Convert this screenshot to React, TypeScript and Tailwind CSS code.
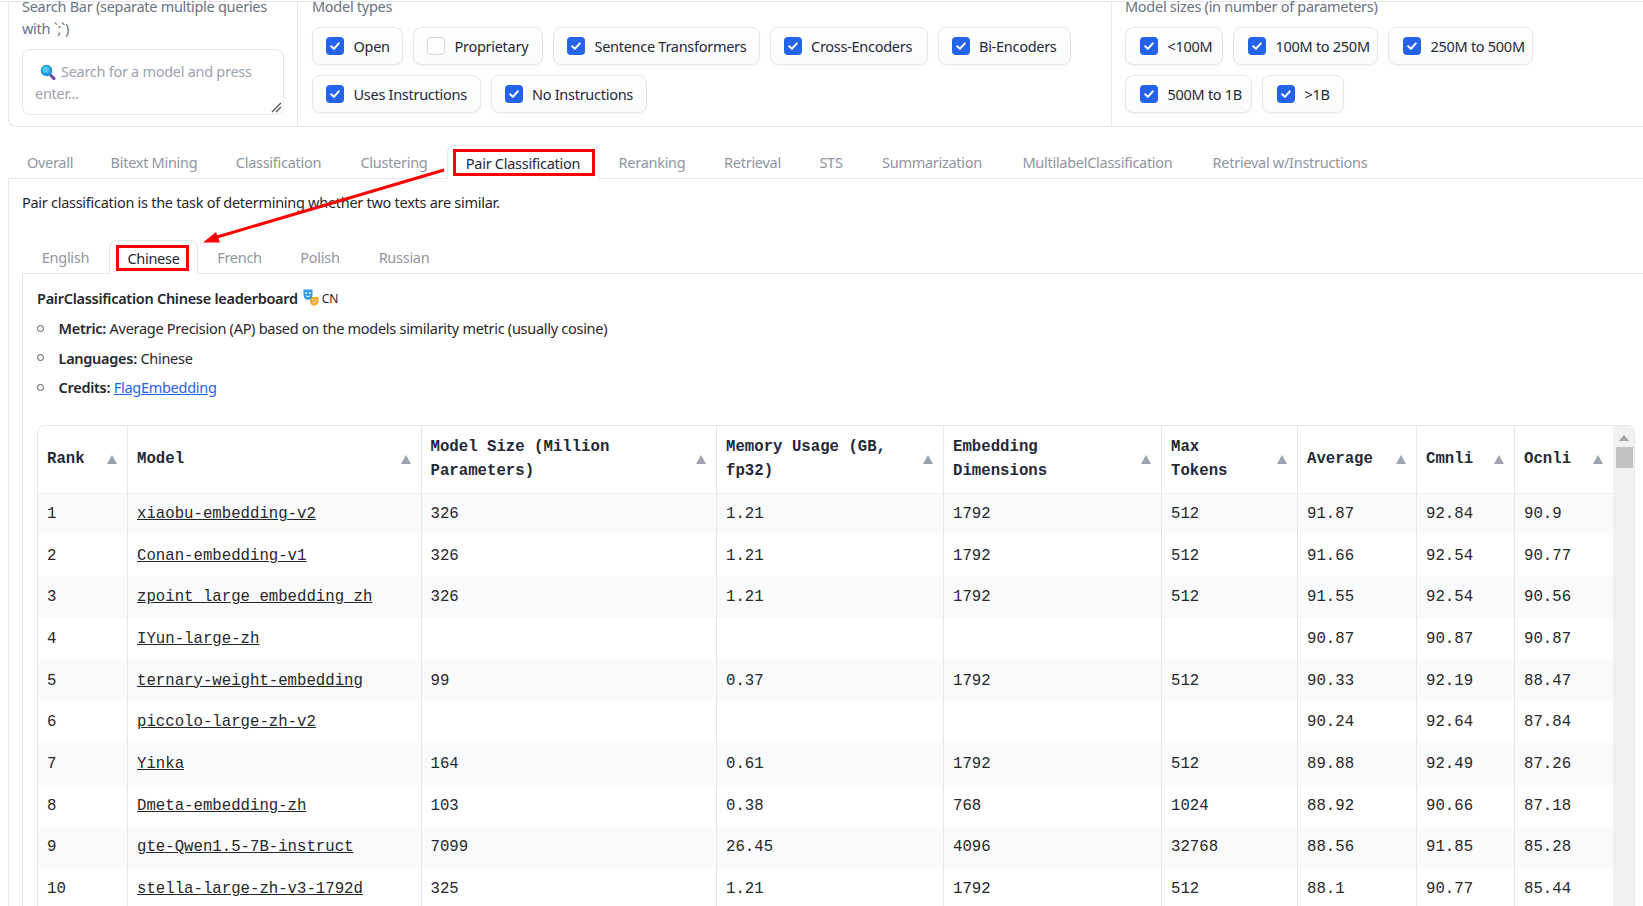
import React from "react";

const sans = "font-['Noto_Sans','Open_Sans',sans-serif] text-[14.5px] leading-[22px] tracking-[-0.28px]";

function Check({ on = true }: { on?: boolean }) {
  if (!on) return <span className="block w-[18px] h-[18px] shrink-0 rounded-[4px] border border-[#d1d5db] bg-white" />;
  return (
    <span className="flex items-center justify-center w-[18px] h-[18px] shrink-0 rounded-[4px] bg-[#2563eb]">
      <svg width="12" height="12" viewBox="0 0 12 12" fill="none">
        <path d="M2.2 6.3 4.9 8.8 9.8 3.4" stroke="#fff" strokeWidth="2" strokeLinecap="round" strokeLinejoin="round" />
      </svg>
    </span>
  );
}

function Chip({ label, width, on = true, pad = "pl-[13px]" }: { label: string; width: string; on?: boolean; pad?: string }) {
  return (
    <div className={`${width} ${pad} h-[38px] flex items-center gap-[9.5px] rounded-lg border border-[#e5e7eb] bg-gradient-to-b from-white to-[#f9fafb] shadow-[0_1px_2px_rgba(0,0,0,0.04)] text-[#1f2937] whitespace-nowrap`}>
      <Check on={on} />
      <span className="-mt-[1px]">{label}</span>
    </div>
  );
}

function SearchEmoji() {
  return (
    <svg className="inline-block align-[-3px] ml-[5px] mr-[5px]" width="16" height="16" viewBox="0 0 16 16">
      <path d="M9.5 10 L14 14.6" stroke="#6b4fa0" strokeWidth="3" strokeLinecap="round" />
      <circle cx="6.5" cy="6.5" r="5.8" fill="#1d9bd8" />
      <circle cx="6" cy="5.6" r="3.4" fill="#4fc3f0" />
    </svg>
  );
}

function MaskEmoji() {
  return (
    <svg className="shrink-0" width="16" height="17" viewBox="0 0 16 17">
      <path d="M7 8 H15.5 V12 C15.5 15 13.5 16.5 11.2 16.5 C9 16.5 7 15 7 12 Z" fill="#f5a623" />
      <path d="M0.5 0.5 H9.5 V6 C9.5 9 7.5 10.8 5 10.8 C2.5 10.8 0.5 9 0.5 6 Z" fill="#2f9be8" />
      <circle cx="3.2" cy="4" r="0.9" fill="#fff" />
      <circle cx="6.8" cy="4" r="0.9" fill="#fff" />
      <path d="M2.8 6.4 C4 8 6 8 7.2 6.4" stroke="#fff" strokeWidth="1" fill="none" />
      <circle cx="9.6" cy="11" r="0.8" fill="#fff" />
      <circle cx="12.9" cy="11" r="0.8" fill="#fff" />
      <path d="M9.6 14.2 C10.6 13 12 13 13 14.2" stroke="#fff" strokeWidth="1" fill="none" />
    </svg>
  );
}

function Tri() {
  return (
    <svg className="shrink-0" width="10" height="9" viewBox="0 0 10 9">
      <path d="M5 0 L10 9 H0 Z" fill="#9ca3af" />
    </svg>
  );
}

const mainTabs: [string, string][] = [
  ["Overall", "w-[84px]"],
  ["Bitext Mining", "w-[124px]"],
  ["Classification", "w-[125px]"],
  ["Clustering", "w-[106px]"],
  ["Pair Classification", "w-[152px]"],
  ["Reranking", "w-[106px]"],
  ["Retrieval", "w-[95px]"],
  ["STS", "w-[62px]"],
  ["Summarization", "w-[140px]"],
  ["MultilabelClassification", "w-[191px]"],
  ["Retrieval w/Instructions", "w-[194px]"],
];
const subTabs: [string, string][] = [
  ["English", "w-[87px]"],
  ["Chinese", "w-[89px]"],
  ["French", "w-[83px]"],
  ["Polish", "w-[78px]"],
  ["Russian", "w-[90px]"],
];

function Tabs({ items, active }: { items: [string, string][]; active: string }) {
  return (
    <div className="flex h-[34px] -mb-px relative">
      {items.map(([t, w]) =>
        t === active ? (
          <div key={t} className={`${w} flex items-center justify-center bg-white text-[#1f2937] border border-b-0 border-[#e5e7eb] rounded-t-lg whitespace-nowrap`}>{t}</div>
        ) : (
          <div key={t} className={`${w} flex items-center justify-center text-[#8f96a3] whitespace-nowrap`}>{t}</div>
        )
      )}
    </div>
  );
}

const headers: { node: React.ReactNode; w: string }[] = [
  { node: "Rank", w: "w-[89.5px]" },
  { node: "Model", w: "w-[293.5px]" },
  { node: <>Model Size (Million<br />Parameters)</>, w: "w-[295.5px]" },
  { node: <>Memory Usage (GB,<br />fp32)</>, w: "w-[227px]" },
  { node: <>Embedding<br />Dimensions</>, w: "w-[218px]" },
  { node: <>Max<br />Tokens</>, w: "w-[136px]" },
  { node: "Average", w: "w-[119px]" },
  { node: "Cmnli", w: "w-[98px]" },
  { node: "Ocnli", w: "w-[98.5px]" },
];

const rows: string[][] = [
  ["1", "xiaobu-embedding-v2", "326", "1.21", "1792", "512", "91.87", "92.84", "90.9"],
  ["2", "Conan-embedding-v1", "326", "1.21", "1792", "512", "91.66", "92.54", "90.77"],
  ["3", "zpoint_large_embedding_zh", "326", "1.21", "1792", "512", "91.55", "92.54", "90.56"],
  ["4", "IYun-large-zh", "", "", "", "", "90.87", "90.87", "90.87"],
  ["5", "ternary-weight-embedding", "99", "0.37", "1792", "512", "90.33", "92.19", "88.47"],
  ["6", "piccolo-large-zh-v2", "", "", "", "", "90.24", "92.64", "87.84"],
  ["7", "Yinka", "164", "0.61", "1792", "512", "89.88", "92.49", "87.26"],
  ["8", "Dmeta-embedding-zh", "103", "0.38", "768", "1024", "88.92", "90.66", "87.18"],
  ["9", "gte-Qwen1.5-7B-instruct", "7099", "26.45", "4096", "32768", "88.56", "91.85", "85.28"],
  ["10", "stella-large-zh-v3-1792d", "325", "1.21", "1792", "512", "88.1", "90.77", "85.44"],
];

function Bullet({ label, children }: { label: string; children: React.ReactNode }) {
  return (
    <li className="flex items-center h-[22px] text-[#27272a]">
      <span className="w-[7px] h-[7px] rounded-full border border-[#4b5563] shrink-0" />
      <span className="ml-[14.5px]"><span className="font-semibold">{label}</span> {children}</span>
    </li>
  );
}

const p3 = "pl-[14px]";

export default function App() {
  return (
    <div className={`relative h-[906px] overflow-hidden bg-white pt-px ${sans}`}>
      <div className="border-t border-[#e5e7eb]">
        <div className="ml-2 h-[125px] flex border-l border-b border-[#e5e7eb] rounded-bl-lg">
          <div className="w-[289px] shrink-0 pl-[13px] pr-[13px] border-r border-[#e5e7eb]">
            <div className="-mt-[7px] text-[#6b7280] w-[250px]">Search Bar (separate multiple queries with `;`)</div>
            <div className="relative mt-[10px] w-[262px] h-[66px] rounded-lg border border-[#e5e7eb] pl-[12px] pt-[10px] text-[#9ca3af]">
              <SearchEmoji />Search for a model and press<br />enter...
              <svg className="absolute right-[1px] bottom-[1px]" width="11" height="11" viewBox="0 0 11 11">
                <path d="M1 10 L10 1 M5 10 L10 5" stroke="#4b5563" strokeWidth="1.3" />
              </svg>
            </div>
          </div>
          <div className="w-[814px] shrink-0 pl-[14px] border-r border-[#e5e7eb]">
            <div className="-mt-[7px] text-[#6b7280]">Model types</div>
            <div className="mt-[10px] flex flex-wrap gap-x-[10px] gap-y-[10px]">
              <Chip label="Open" width="w-[91px]" />
              <Chip label="Proprietary" width="w-[130px]" on={false} />
              <Chip label="Sentence Transformers" width="w-[206.5px]" />
              <Chip label="Cross-Encoders" width="w-[158px]" />
              <Chip label="Bi-Encoders" width="w-[133px]" />
              <Chip label="Uses Instructions" width="w-[168.5px]" />
              <Chip label="No Instructions" width="w-[156px]" />
            </div>
          </div>
          <div className="flex-1 pl-[13px]">
            <div className="-mt-[7px] text-[#6b7280]">Model sizes (in number of parameters)</div>
            <div className="mt-[10px] flex flex-wrap gap-x-[10px] gap-y-[10px] w-[420px]">
              <Chip label="<100M" width="w-[98px]" pad={p3} />
              <Chip label="100M to 250M" width="w-[145px]" pad={p3} />
              <Chip label="250M to 500M" width="w-[145px]" pad={p3} />
              <Chip label="500M to 1B" width="w-[127px]" pad={p3} />
              <Chip label=">1B" width="w-[82px]" pad={p3} />
            </div>
          </div>
        </div>
      </div>

      <div className="ml-2 mt-[18px]">
        <Tabs items={mainTabs} active="Pair Classification" />
        <div className="border-l border-t border-[#e5e7eb] pl-[13px] pt-[12px]">
          <div className="text-[#27272a]">Pair classification is the task of determining whether two texts are similar.</div>
          <div className="mt-[27px]">
            <Tabs items={subTabs} active="Chinese" />
            <div className="border-l border-t border-[#e5e7eb] pl-[14px] pt-[13px]">
              <div className="flex items-center h-[22px] text-[#27272a]">
                <span className="font-semibold">PairClassification Chinese leaderboard</span>
                <span className="ml-[5px] -mt-[1px]"><MaskEmoji /></span>
                <span className="ml-[3px] mt-[2px] text-[12px]">CN</span>
              </div>
              <ul className="mt-[8px] flex flex-col gap-[7.5px]">
                <Bullet label="Metric:">Average Precision (AP) based on the models similarity metric (usually cosine)</Bullet>
                <Bullet label="Languages:">Chinese</Bullet>
                <Bullet label="Credits:"><span className="text-[#2563eb] underline">FlagEmbedding</span></Bullet>
              </ul>
              <div className="mt-[27px] w-[1598px] flex border border-[#e5e7eb] rounded-lg overflow-hidden font-['Liberation_Mono',monospace] text-[15.7px] leading-[24px] tracking-normal text-[#27272a]">
                <table className="table-fixed border-collapse w-[1575px] shrink-0 self-start">
                  <colgroup>
                    {headers.map((h, i) => <col key={i} className={h.w} />)}
                  </colgroup>
                  <thead>
                    <tr className="h-[67px] border-b border-[#eef0f3]">
                      {headers.map((h, i) => (
                        <th key={i} className={`p-0 font-bold text-left text-[#1f2937] ${i < 8 ? "border-r border-[#e5e7eb]" : ""}`}>
                          <div className="flex items-center justify-between pl-[9px] pr-[10px]">
                            <span>{h.node}</span>
                            <Tri />
                          </div>
                        </th>
                      ))}
                    </tr>
                  </thead>
                  <tbody>
                    {rows.map((r, ri) => (
                      <tr key={ri} className={`h-[41.7px] ${ri % 2 === 0 ? "bg-[#f9fafb]" : "bg-white"}`}>
                        {r.map((c, ci) => (
                          <td key={ci} className={`p-0 pl-[9px] ${ci < 8 ? "border-r border-[#e5e7eb]" : ""}`}>
                            {ci === 1 ? <span className="underline">{c}</span> : c}
                          </td>
                        ))}
                      </tr>
                    ))}
                  </tbody>
                </table>
                <div className="w-[22px] h-[600px] shrink-0 bg-[#f1f1f1] flex flex-col items-center pt-[9px]">
                  <svg width="10" height="6" viewBox="0 0 10 6"><path d="M5 0 L10 6 H0 Z" fill="#a3a3a3" /></svg>
                  <div className="mt-[6px] w-[17px] h-[21px] bg-[#c1c1c1]" />
                </div>
              </div>
            </div>
          </div>
        </div>
      </div>

      {/* Red annotation marks drawn over the page */}
      <div className="absolute left-[453px] top-[149px] w-[142px] h-[27px] border-[3px] border-[#ff0000]" />
      <div className="absolute left-[116px] top-[245px] w-[73px] h-[26px] border-[3px] border-[#ff0000]" />
      <svg className="absolute left-0 top-0 pointer-events-none" width="600" height="300" viewBox="0 0 600 300">
        <path d="M444 170 L217 237" stroke="#ff0000" strokeWidth="3" />
        <path d="M203 242.5 L216 232 L220 242.5 Z" fill="#ff0000" />
      </svg>
    </div>
  );
}
